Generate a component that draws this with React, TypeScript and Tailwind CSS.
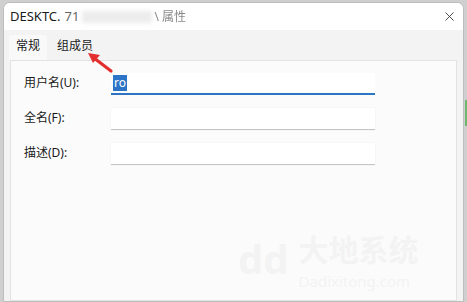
import { X } from 'lucide-react'

const fields = [
  { label: '用户名(U):', value: 'ro', focused: true },
  { label: '全名(F):', value: '' },
  { label: '描述(D):', value: '' }
]

const App = (): JSX.Element => {
  return (
    <div
      className="relative w-[467px] h-[302px] overflow-hidden bg-[#cfcfcf] pt-[2px] pl-[3px]"
      style={{ fontFamily: '"Segoe UI", "Noto Sans", "Noto Sans CJK SC", sans-serif' }}
    >
      <div className="flex flex-col w-[461px] h-[300px] rounded-t-[7px] border border-[#bdbdbd] bg-[#f3f3f3] overflow-hidden">
        {/* title bar */}
        <div className="flex items-center justify-between h-[27px] bg-white pl-[6px] pr-[6px]">
          <div className="flex items-center text-[13px] text-[#1a1a1a] leading-none">
            <span>DESKTC.</span>
            <span className="ml-[4px] text-[#666]">71</span>
            <span className="ml-[3px] w-[70px] h-[12px] bg-[#ececec] blur-[2px]" />
            <span className="ml-[2px] text-[12px] text-[#8a8a8a] blur-[0.6px]">\ 属性</span>
          </div>
          <X className="w-[15px] h-[15px] text-[#333]" strokeWidth={1.4} />
        </div>

        {/* tabs */}
        <div className="flex items-end h-[30px] pl-[5px] text-[12px] text-[#1a1a1a]">
          <div className="h-[25px] px-[7px] pt-[2px] bg-[#f9f9f9] rounded-t-[3px]">常规</div>
          <div className="h-[25px] px-[10px] pt-[2px]">组成员</div>
        </div>

        {/* panel */}
        <div className="flex-1 mx-[6px] border border-[#e3e3e3] bg-[#fbfbfb] pl-[13px] pt-[12px]">
          <div className="flex flex-col gap-[13px]">
            {fields.map((f) => (
              <div key={f.label} className="flex items-center">
                <div className="w-[87px] text-[12px] text-[#1a1a1a] -mt-[2px]">{f.label}</div>
                <div
                  className={
                    f.focused
                      ? 'flex items-center w-[264px] h-[22px] bg-white border-b-2 border-[#2b76c4] pl-[2px]'
                      : 'flex items-center w-[264px] h-[22px] bg-white border-b border-[#c4c4c4] shadow-[0_0_1px_#e0e0e0]'
                  }
                >
                  {f.value && (
                    <span className="bg-[#2c74c6] text-white text-[12px] leading-[16px] px-[1px]">
                      {f.value}
                    </span>
                  )}
                </div>
              </div>
            ))}
          </div>
        </div>
      </div>

      {/* right-hand backdrop */}
      <div className="absolute right-0 top-[100px] w-[2px] h-[26px] bg-[#6db86d]" />

      {/* watermark */}
      <div className="absolute left-[238px] top-[226px] flex items-center gap-[10px] text-[#f3f3f3] select-none">
        <span className="text-[40px] font-bold leading-[56px]">dd</span>
        <div className="flex flex-col">
          <span
            className="text-[30px] font-bold leading-[44px]"
            style={{ fontFamily: '"Noto Sans CJK SC", sans-serif' }}
          >
            大地系统
          </span>
          <span className="text-[15px] leading-[22px]">Dadixitong.com</span>
        </div>
      </div>

      {/* red arrow annotation */}
      <svg className="absolute left-0 top-0" width="467" height="302">
        <line x1="111" y1="71" x2="94" y2="58" stroke="#e3302f" strokeWidth="3.2" strokeLinecap="round" />
        <polygon points="88,53 100,55 93,63" fill="#e3302f" />
      </svg>
    </div>
  )
}

export default App
